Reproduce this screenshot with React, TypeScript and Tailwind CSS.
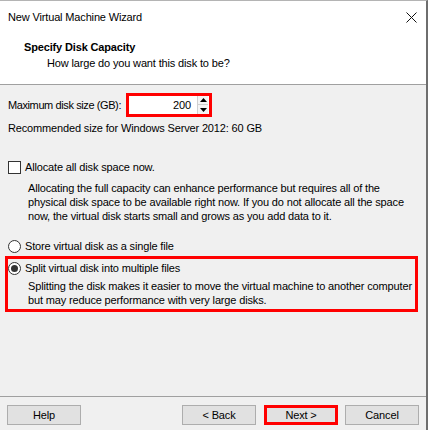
import React from "react";

function Radio({ checked }: { checked?: boolean }) {
  return (
    <span className="w-[13px] h-[13px] rounded-full border border-[#333] bg-white flex items-center justify-center shrink-0">
      {checked && <span className="w-[7px] h-[7px] rounded-full bg-[#333]" />}
    </span>
  );
}

function Btn({ children, red }: { children: React.ReactNode; red?: boolean }) {
  return (
    <div
      className={
        "w-[74px] h-[20px] flex items-center justify-center bg-[#e1e1e1] " +
        (red ? "border-[3px] border-[#ff0000]" : "border border-[#adadad]")
      }
    >
      {children}
    </div>
  );
}

export default function App() {
  return (
    <div
      className="w-[428px] h-[430px] bg-[#f0f0f0] border-t border-[#b4b4b4] border-r-2 border-r-[#6e6e6e] flex flex-col text-[11px] tracking-[-0.15px] text-black leading-[14px] overflow-hidden whitespace-nowrap"
      style={{ fontFamily: '"Liberation Sans", Arial, sans-serif' }}
    >
      <div className="bg-white h-[84px] border-b border-[#a0a0a0] flex flex-col shrink-0">
        <div className="h-[32px] flex items-center justify-between pl-[8px] pr-[9px]">
          <span className="text-[#000]">New Virtual Machine Wizard</span>
          <svg width="11" height="11" viewBox="0 0 11 11">
            <path d="M0.5 0.5 L10.5 10.5 M10.5 0.5 L0.5 10.5" stroke="#111" strokeWidth="1" />
          </svg>
        </div>
        <div className="pl-[24px] mt-[7px] font-bold leading-[14px]">Specify Disk Capacity</div>
        <div className="pl-[47px] mt-[2px] leading-[14px]">How large do you want this disk to be?</div>
      </div>

      <div className="flex flex-col px-[8px] grow">
        <div className="flex items-center mt-[8px] h-[24px]">
          <span className="w-[118px] shrink-0 tracking-[-0.4px]">Maximum disk size (GB):</span>
          <div className="w-[86px] h-[24px] border-[3px] border-[#ff0000] bg-white flex items-stretch">
            <div className="grow flex items-center justify-end pr-[6px]">200</div>
            <div className="w-[11px] flex flex-col border-l border-[#d0d0d0] mr-[1px]">
              <div className="h-1/2 flex items-center justify-center bg-[#f5f5f5] border-b border-[#d0d0d0]">
                <svg width="7" height="4" viewBox="0 0 7 4"><path d="M3.5 0 L7 4 L0 4 Z" fill="#000" /></svg>
              </div>
              <div className="h-1/2 flex items-center justify-center bg-[#f5f5f5]">
                <svg width="7" height="4" viewBox="0 0 7 4"><path d="M0 0 L7 0 L3.5 4 Z" fill="#000" /></svg>
              </div>
            </div>
          </div>
        </div>
        <div className="mt-[4px]">Recommended size for Windows Server 2012: 60 GB</div>

        <div className="flex items-center mt-[24px] h-[16px]">
          <span className="w-[13px] h-[13px] border border-[#333] bg-white shrink-0" />
          <span className="ml-[4px]">Allocate all disk space now.</span>
        </div>
        <div className="mt-[6px] pl-[20px]">
          Allocating the full capacity can enhance performance but requires all of the
          <br />
          physical disk space to be available right now. If you do not allocate all the space
          <br />
          now, the virtual disk starts small and grows as you add data to it.
        </div>

        <div className="flex items-center mt-[15px] h-[16px]">
          <Radio />
          <span className="ml-[4px]">Store virtual disk as a single file</span>
        </div>

        <div className="mt-[2px] -ml-[3px] w-[413px] h-[56px] border-[3px] border-[#ff0000] flex flex-col">
          <div className="flex items-center mt-[1px] h-[16px]">
            <Radio checked />
            <span className="ml-[4px]">Split virtual disk into multiple files</span>
          </div>
          <div className="mt-[3px] pl-[20px]">
            Splitting the disk makes it easier to move the virtual machine to another computer
            <br />
            but may reduce performance with very large disks.
          </div>
        </div>
      </div>

      <div className="border-t border-[#a0a0a0] h-[34px] shrink-0 flex items-start pt-[8px] px-[7px]">
        <Btn>Help</Btn>
        <div className="grow" />
        <Btn>&lt; Back</Btn>
        <div className="w-[8px]" />
        <Btn red>Next &gt;</Btn>
        <div className="w-[7px]" />
        <Btn>Cancel</Btn>
      </div>
    </div>
  );
}
